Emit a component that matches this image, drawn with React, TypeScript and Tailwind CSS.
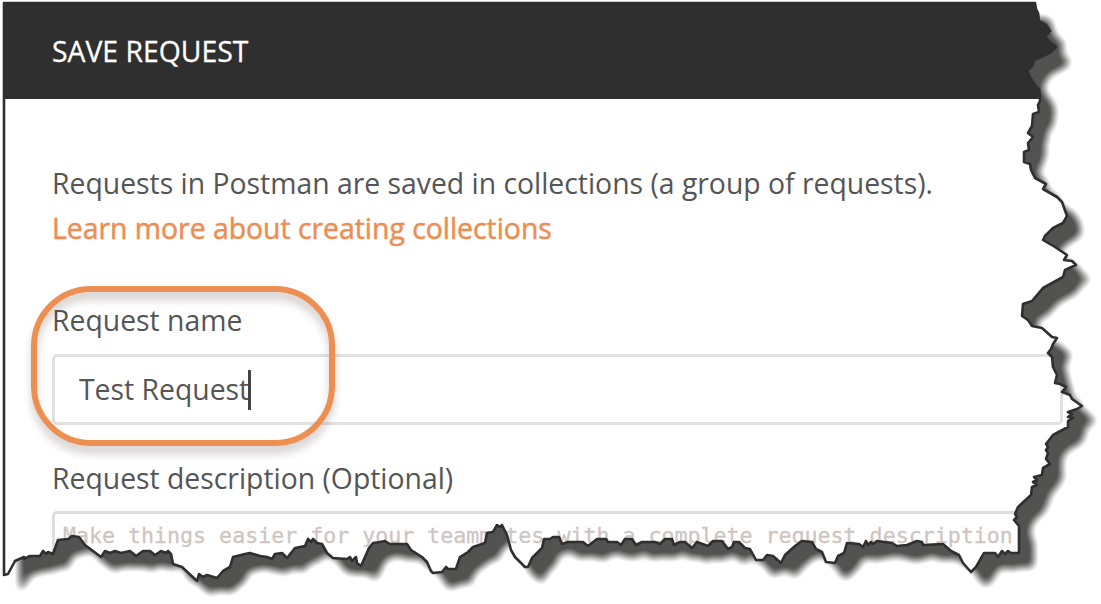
const TORN_EDGE =
  "1035,3 1036,9 1038,13 1039,21 1046,25 1050,31 1045,37 1051,43 1056,47 1051,52 1041,57 1034,60 1032,66 1027,71 1031,79 1035,85 1039,89 1040,98 " +
  "1040,101 1038,105 1039,112 1033,114 1032,126 1028,133 1033,137 1028,143 1029,150 1024,152 1024,162 1030,164 1031,170 1035,178 1046,184 1043,189 1057,197 1062,202 1067,216 1063,223 1053,228 1045,236 1043,240 " +
  "1055,247 1067,255 1064,260 1072,261 1076,265 1065,270 1063,277 1043,288 1032,301 1023,304 1022,316 1028,320 1032,326 1042,328 1052,337 1057,338 1053,344 1051,349 1048,353 1052,357 1053,367 1057,375 1055,383 1060,384 1066,387 1062,392 1070,395 " +
  "1072,399 1082,406 1077,409 1068,412 1072,414 1068,417 1073,418 1068,421 1068,427 1053,435 1046,444 1048,447 1046,450 1048,453 1046,459 1050,464 1043,468 1042,475 1034,477 1037,480 1033,482 1037,485 1032,487 1031,495 1018,507 1015,514 1017,517 1014,520 1019,526 1019,553 " +
  "1011,553 1008,551 1005,554 1002,551 998,557 995,553 984,553 976,567 971,572 963,563 959,555 951,551 943,544 923,545 922,542 917,541 907,545 897,546 892,543 877,541 873,544 871,542 868,545 866,541 863,547 859,544 847,543 844,553 838,556 835,563 826,562 822,552 816,549 812,542 802,541 795,546 785,555 781,563 773,556 767,555 763,560 756,560 " +
  "750,549 745,548 739,542 734,542 732,547 728,549 722,541 713,541 708,546 697,542 692,548 685,542 680,542 674,545 672,539 665,539 660,544 655,542 642,542 636,545 632,539 625,539 621,545 617,542 608,542 606,539 597,539 588,546 583,542 568,542 562,544 559,537 553,537 550,539 544,539 542,548 532,558 528,567 525,567 515,557 511,550 507,535 502,525 500,527 497,525 493,532 487,533 485,543 473,547 468,552 460,557 456,569 448,569 446,567 442,572 433,573 431,571 427,562 422,557 411,550 407,544 390,544 385,541 380,542 373,543 369,548 365,557 361,566 357,563 356,557 352,561 350,557 347,559 333,558 327,553 322,544 317,543 313,539 311,542 308,539 305,546 295,548 287,558 282,553 275,554 272,559 267,557 260,556 250,553 245,554 233,557 230,567 223,571 217,578 207,575 203,577 199,574 197,581 182,567 173,564 171,554 168,551 166,553 161,551 155,555 150,551 143,551 136,556 130,551 121,553 115,551 110,553 105,551 101,557 93,551 85,545 79,537 72,536 68,539 58,540 53,554 48,552 46,554 43,551 40,556 30,556 24,559 24,557 15,561 8,574 4,575";

function PaperEdge() {
  const page = `M4,3 L${TORN_EDGE.split(" ").join(" L")} Z`;
  const outside = `M0,0 H1101 V604 H0 Z ${page}`;
  return (
    <svg className="pointer-events-none absolute inset-0 h-full w-full" viewBox="0 0 1101 604" fill="none">
      <defs>
        <clipPath id="outside">
          <path d={outside} clipRule="evenodd" />
        </clipPath>
        <filter id="soften" x="-5%" y="-5%" width="115%" height="115%" colorInterpolationFilters="sRGB">
          <feGaussianBlur stdDeviation="5" />
          <feComponentTransfer>
            <feFuncA type="linear" slope="1.4" intercept="-0.2" />
          </feComponentTransfer>
        </filter>
      </defs>
      <path d={outside} fillRule="evenodd" fill="#fff" />
      <g clipPath="url(#outside)">
        <path d={page} transform="translate(15 15)" fill="#525250" filter="url(#soften)" />
      </g>
      {/* The shadow falls back over the notch in the dark title bar. */}
      <polyline points={`4,98 4,3 ${TORN_EDGE} 4,98`} stroke="#2f2f2f" strokeWidth="2.6" strokeLinejoin="round" />
    </svg>
  );
}

export default function App() {
  return (
    <div className="relative h-[604px] w-[1101px] overflow-hidden bg-white pt-[3px] pl-1 font-['Open_Sans','Noto_Sans',sans-serif] text-[28.35px] leading-[45px] text-[#555]">
      <header className="flex h-24 items-center bg-[#2f2f2f] pl-12 text-white">
        <h1 className="[-webkit-text-stroke:0.3px_#fff]">SAVE REQUEST</h1>
      </header>
      <main className="flex flex-col pt-[62px] pl-12 whitespace-nowrap">
        <p>Requests in Postman are saved in collections (a group of requests).</p>
        <a className="text-[#ee8d52] [-webkit-text-stroke:0.5px_#ee8d52]">Learn more about creating collections</a>
        <label className="mt-[47px]">Request name</label>
        <div className="mt-[11px] flex h-[71px] w-[1011px] items-center rounded-[5px] border-[3px] border-[#e3e1e0] pl-6">
          <span>Test Request</span>
          <span className="-ml-px h-10 w-[3px] bg-[#444]" />
        </div>
        <label className="mt-[31px]">Request description (Optional)</label>
        <div className="mt-[10px] h-[90px] w-[1000px] rounded-[5px] border-[3px] border-[#e0dcda] pl-[8px] font-['DejaVu_Sans_Mono',monospace] text-[21.62px] leading-[43px] text-[#cec5c1] [-webkit-text-stroke:0.3px_#cec5c1]">
          Make things easier for your teammates with a complete request description
        </div>
      </main>
      <div className="absolute top-[286px] left-[31px] h-[160px] w-[304px] rounded-[60px] border-[6px] border-[#ed8e53] shadow-[0_8px_7px_1px_rgba(90,70,65,0.2),inset_0_8px_7px_1px_rgba(90,70,65,0.2)]" />
      <PaperEdge />
    </div>
  );
}
